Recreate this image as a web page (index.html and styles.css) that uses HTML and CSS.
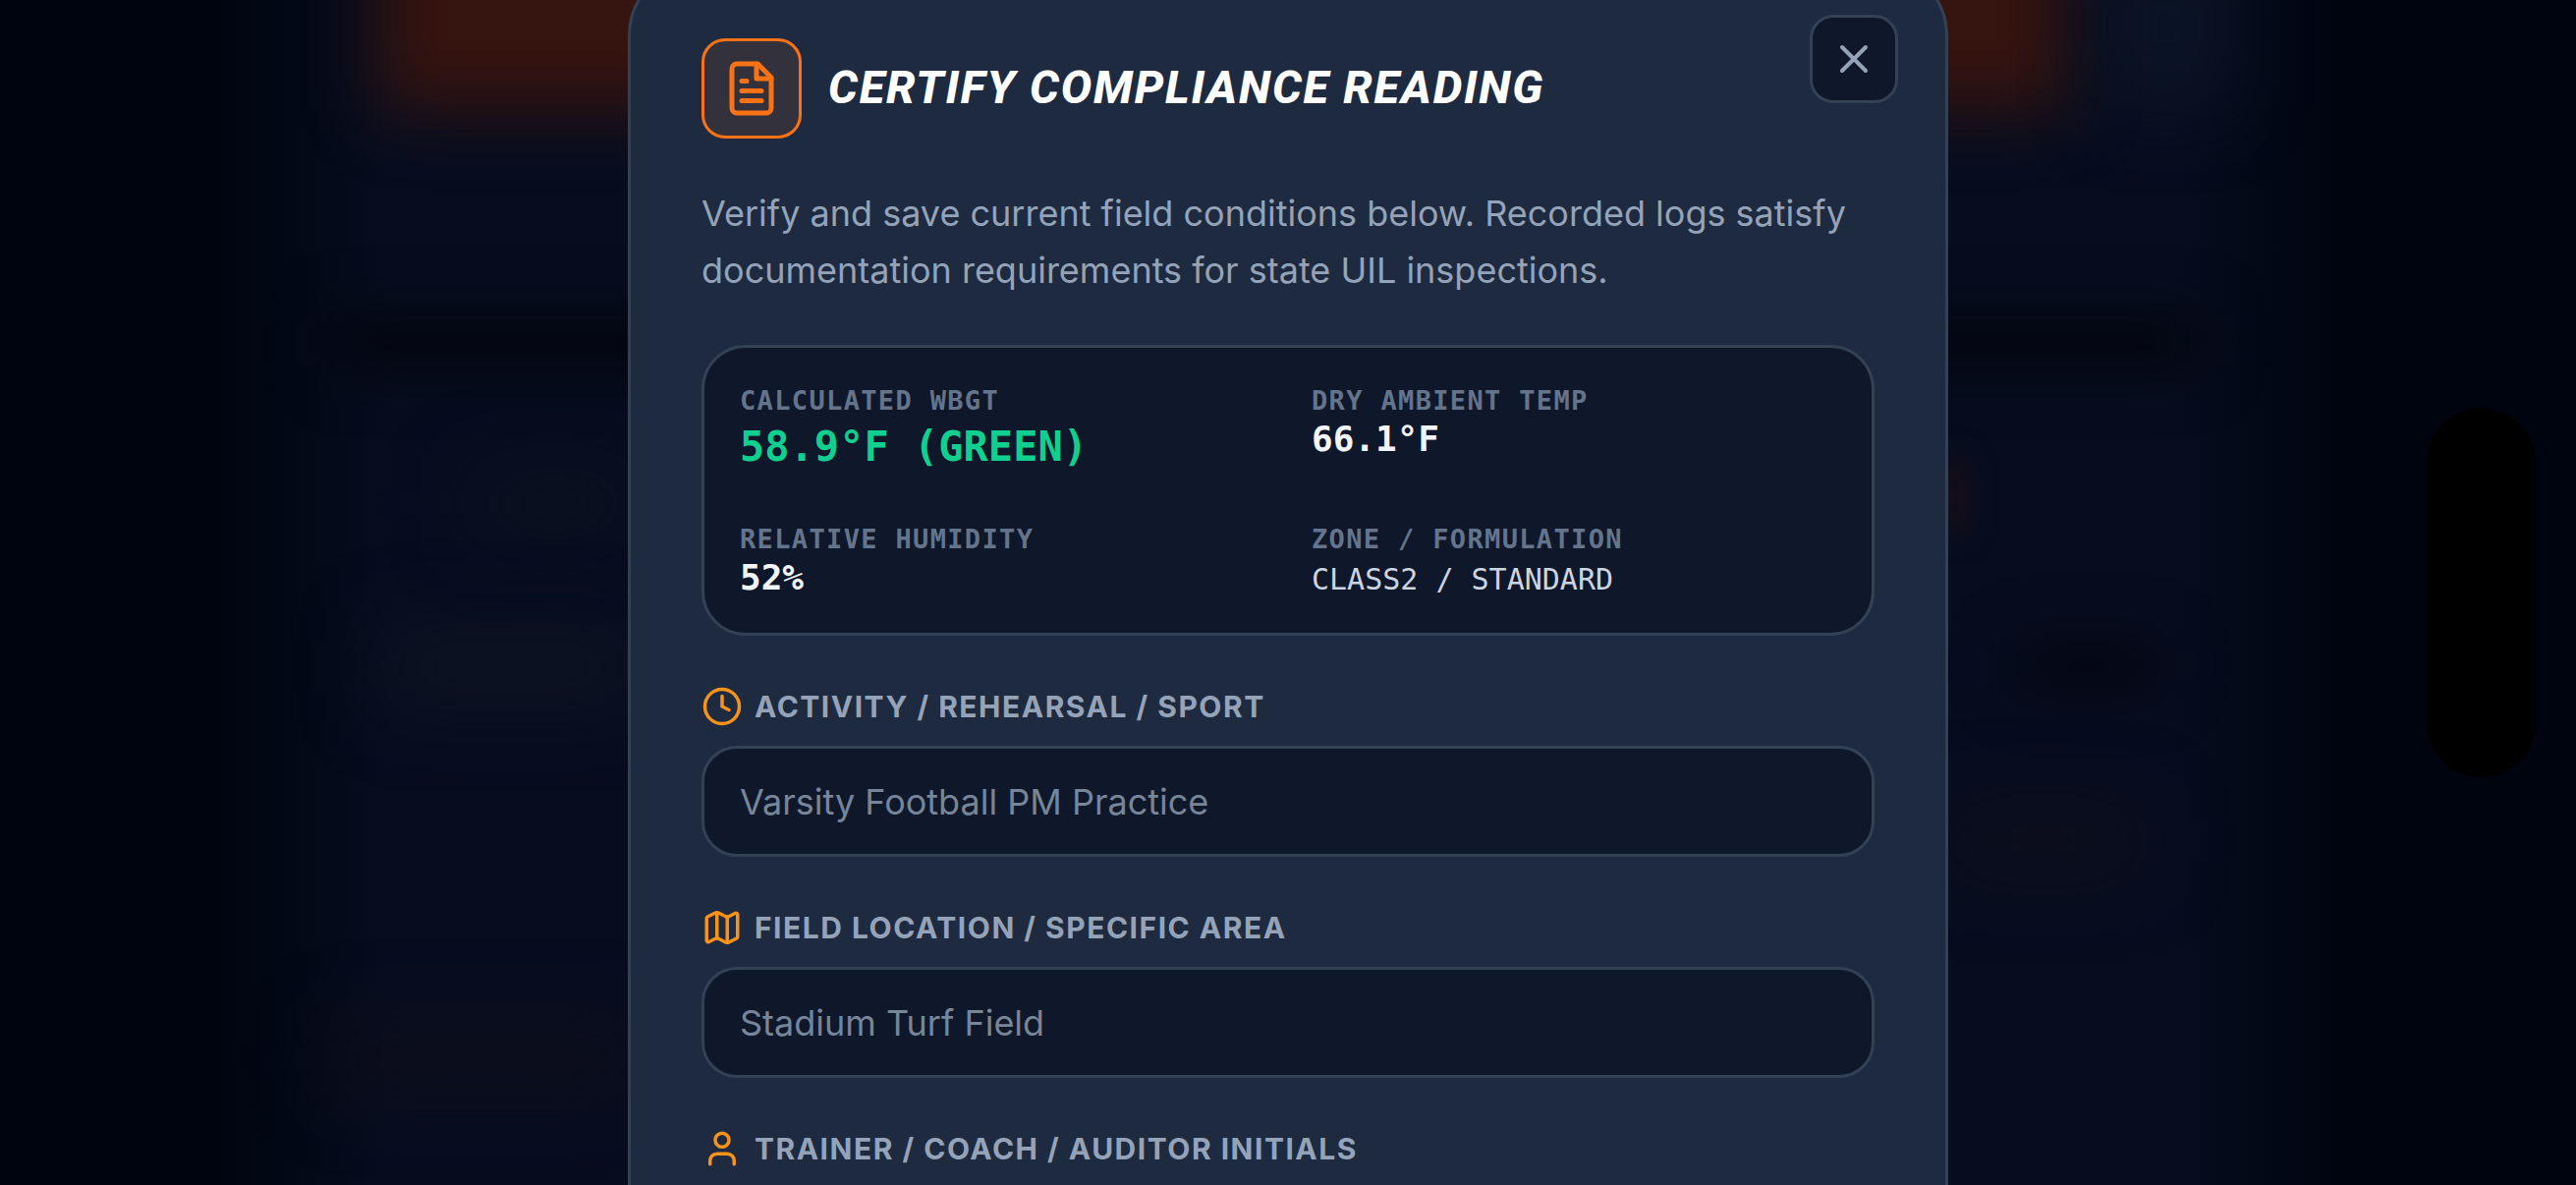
FILE: index.html
```html
<!DOCTYPE html>
<html lang="en">
<head>
<meta charset="utf-8">
<title>Certify Compliance Reading</title>
<link rel="stylesheet" href="styles.css">
</head>
<body>
<div class="backdrop">
  <div class="blob blob-orange"></div>
  <div class="blob blob-band"></div>
  <div class="blob blob-lite-a"></div>
  <div class="blob blob-lite-b"></div>
  <div class="blob blob-warm-a"></div>
  <div class="blob blob-warm-b"></div>
  <div class="blob blob-warm-c"></div>
  <div class="blob blob-dark"></div>
  <div class="blob blob-navy"></div>
</div>
<div class="notch"></div>
<main class="modal">
  <button class="close" aria-label="Close">
    <svg class="close-icon" viewBox="0 0 24 24"><path d="M18 6 6 18"/><path d="m6 6 12 12"/></svg>
  </button>
  <header class="head">
    <div class="head-badge">
      <svg class="doc-icon" viewBox="0 0 24 24"><path d="M14.5 2H6a2 2 0 0 0-2 2v16a2 2 0 0 0 2 2h12a2 2 0 0 0 2-2V7.5L14.5 2z"/><path d="M14 2v6h6"/><path d="M16 13H8"/><path d="M16 17H8"/><path d="M10 9H8"/></svg>
    </div>
    <h1 class="title">CERTIFY COMPLIANCE READING</h1>
  </header>
  <p class="desc">Verify and save current field conditions below. Recorded logs satisfy documentation requirements for state UIL inspections.</p>
  <section class="stats">
    <div class="stat">
      <div class="stat-label">CALCULATED WBGT</div>
      <div class="stat-big">58.9°F (GREEN)</div>
    </div>
    <div class="stat">
      <div class="stat-label">DRY AMBIENT TEMP</div>
      <div class="stat-value">66.1°F</div>
    </div>
    <div class="stat">
      <div class="stat-label">RELATIVE HUMIDITY</div>
      <div class="stat-value">52%</div>
    </div>
    <div class="stat">
      <div class="stat-label">ZONE / FORMULATION</div>
      <div class="stat-small">CLASS2 / STANDARD</div>
    </div>
  </section>
  <div class="field">
    <label class="field-label">
      <svg class="field-icon" viewBox="0 0 24 24"><circle cx="12" cy="12" r="10"/><path d="M12 6v6l4 2"/></svg>
      ACTIVITY / REHEARSAL / SPORT
    </label>
    <div class="input">Varsity Football PM Practice</div>
  </div>
  <div class="field">
    <label class="field-label">
      <svg class="field-icon" viewBox="0 0 24 24"><path d="M14.106 5.553a2 2 0 0 0 1.788 0l3.659-1.83A1 1 0 0 1 21 4.619v12.764a1 1 0 0 1-.553.894l-4.553 2.277a2 2 0 0 1-1.788 0l-4.212-2.106a2 2 0 0 0-1.788 0l-3.659 1.83A1 1 0 0 1 3 19.381V6.618a1 1 0 0 1 .553-.894l4.553-2.277a2 2 0 0 1 1.788 0z"/><path d="M15 5.764v15"/><path d="M9 3.236v15"/></svg>
      FIELD LOCATION / SPECIFIC AREA
    </label>
    <div class="input">Stadium Turf Field</div>
  </div>
  <div class="field">
    <label class="field-label">
      <svg class="field-icon" viewBox="0 0 24 24"><path d="M19 21v-2a4 4 0 0 0-4-4H9a4 4 0 0 0-4 4v2"/><circle cx="12" cy="7" r="4"/></svg>
      TRAINER / COACH / AUDITOR INITIALS
    </label>
    <div class="input"></div>
  </div>
</main>
</body>
</html>
```
FILE: styles.css
```css
* { box-sizing: border-box; }
html, body { margin: 0; height: 100%; }
body {
  position: relative;
  display: flex;
  justify-content: center;
  align-items: flex-start;
  height: 100vh;
  overflow: hidden;
  font-family: "Inter", "Liberation Sans", sans-serif;
  background: linear-gradient(90deg, #00040f 210px, #070d1f 400px, #070d1f 2210px, #00040f 2390px);
}
.backdrop { position: absolute; inset: 0; overflow: hidden; }
.blob { position: absolute; }
.blob-orange { left: 385px; top: -150px; width: 1720px; height: 262px; background: #36140f; filter: blur(34px); }
.blob-navy { left: 2140px; top: -60px; width: 130px; height: 170px; background: #0b1425; filter: blur(36px); }
.blob-band { left: 340px; top: 320px; width: 1900px; height: 55px; background: #03050d; filter: blur(30px); }
.blob-lite-a { left: 390px; top: 645px; width: 260px; height: 65px; background: #0e1522; filter: blur(40px); }
.blob-lite-b { left: 480px; top: 485px; width: 170px; height: 55px; background: #0c1220; filter: blur(40px); }
.blob-warm-a { left: 340px; top: 1050px; width: 310px; height: 55px; background: #100e1b; filter: blur(40px); }
.blob-warm-b { left: 1980px; top: 825px; width: 200px; height: 60px; background: #0e0e1b; filter: blur(40px); }
.blob-warm-c { left: 1975px; top: 470px; width: 22px; height: 70px; background: #1f0f10; filter: blur(16px); }
.blob-dark { left: 2050px; top: 655px; width: 150px; height: 45px; background: #03040f; filter: blur(30px); }
.notch {
  position: absolute;
  left: 2470px;
  top: 415px;
  width: 111px;
  height: 376px;
  border-radius: 56px;
  background: #000;
}
.modal {
  position: relative;
  flex: none;
  width: 1344px;
  margin-top: -36px;
  padding: 72px;
  background: #1e2a40;
  border: 3px solid #334155;
  border-radius: 72px;
}
.close {
  position: absolute;
  top: 48px;
  right: 48px;
  width: 90px;
  height: 90px;
  display: flex;
  align-items: center;
  justify-content: center;
  padding: 0;
  background: #0f172a;
  border: 3px solid #334155;
  border-radius: 24px;
}
.close-icon { width: 48px; height: 48px; fill: none; stroke: #94a3b8; stroke-width: 2; stroke-linecap: round; stroke-linejoin: round; }
.head { display: flex; align-items: center; gap: 27px; }
.head-badge {
  flex: none;
  width: 102px;
  height: 102px;
  display: flex;
  align-items: center;
  justify-content: center;
  background: rgba(249,115,22,.1);
  border: 3px solid #f97316;
  border-radius: 24px;
}
.doc-icon { width: 60px; height: 60px; fill: none; stroke: #f97316; stroke-width: 2; stroke-linecap: round; stroke-linejoin: round; }
.title {
  margin: 0 0 3px;
  font-family: "Roboto", "Liberation Sans", sans-serif;
  font-size: 47px;
  font-weight: 800;
  font-style: italic;
  letter-spacing: 1.8px;
  line-height: 60px;
  color: #fff;
}
.desc {
  margin: 48px 0 47px;
  font-size: 36px;
  line-height: 57.6px;
  color: #94a3b8;
}
.stats {
  display: grid;
  grid-template-columns: 1fr 1fr;
  gap: 48px;
  padding: 36px 36px 32px;
  background: #0f172a;
  border: 3px solid #334155;
  border-radius: 45px;
}
.stat-label {
  font-family: "DejaVu Sans Mono", "Liberation Mono", monospace;
  font-size: 27px;
  font-weight: 700;
  letter-spacing: 1.35px;
  line-height: 36px;
  color: #64748b;
}
.stat-big, .stat-value, .stat-small { font-family: "DejaVu Sans Mono", "Liberation Mono", monospace; }
.stat-big { font-size: 42px; font-weight: 700; line-height: 57px; color: #10d090; }
.stat-value { font-size: 36px; font-weight: 700; line-height: 42px; color: #f1f5f9; }
.stat-small { font-size: 30px; font-weight: 400; line-height: 45px; color: #cbd5e1; }
.field { margin-top: 51px; }
.field-label {
  display: flex;
  align-items: center;
  gap: 12px;
  height: 42px;
  margin-bottom: 19px;
  font-size: 30px;
  font-weight: 700;
  letter-spacing: 1.5px;
  color: #94a3b8;
}
.field-icon { flex: none; width: 42px; height: 42px; fill: none; stroke: #f7931a; stroke-width: 2; stroke-linecap: round; stroke-linejoin: round; }
.input {
  height: 113px;
  display: flex;
  align-items: center;
  padding: 0 36px;
  background: #0f172a;
  border: 3px solid #334155;
  border-radius: 36px;
  font-size: 36px;
  color: #778598;
}
```
